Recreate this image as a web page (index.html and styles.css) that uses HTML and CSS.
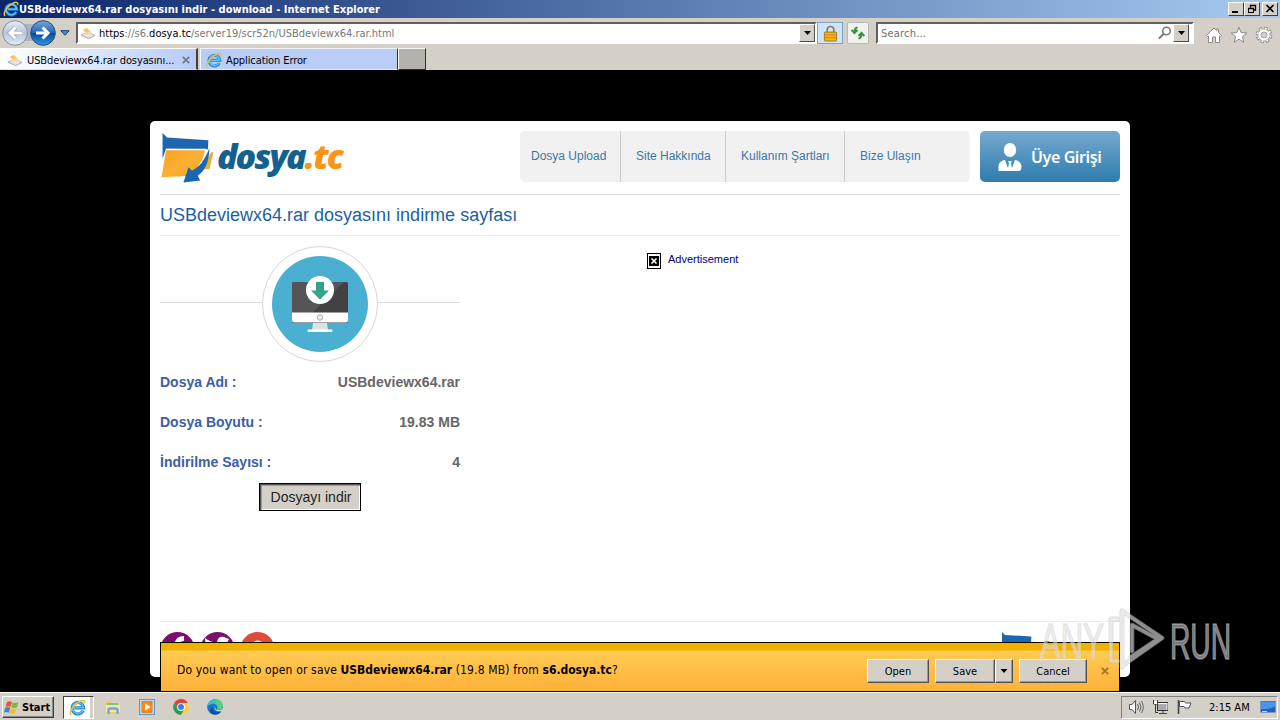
FILE: index.html
```html
<!DOCTYPE html>
<html lang="tr">
<head>
<meta charset="utf-8">
<title>USBdeviewx64.rar dosyasını indir - download</title>
<link rel="stylesheet" href="styles.css">
</head>
<body>
<svg class="defs" width="0" height="0">
  <defs>
    <linearGradient id="gBlue" x1="0" y1="0" x2="0" y2="1"><stop offset="0" stop-color="#7aa3dc"/><stop offset=".48" stop-color="#2468b8"/><stop offset=".52" stop-color="#0b4a9e"/><stop offset="1" stop-color="#2f9be4"/></linearGradient>
    <linearGradient id="gGrey" x1="0" y1="0" x2="0" y2="1"><stop offset="0" stop-color="#e6ecf5"/><stop offset=".5" stop-color="#b9c6da"/><stop offset="1" stop-color="#e3edf8"/></linearGradient>
    <linearGradient id="gFold" x1="0" y1="0" x2="1" y2="1"><stop offset="0" stop-color="#ff9f1f"/><stop offset=".5" stop-color="#fbb034"/><stop offset="1" stop-color="#e9a820"/></linearGradient>
    <symbol id="ie" viewBox="0 0 16 16">
      <path d="M13.300 11A5.400 5.400 0 1 1 13.800 8.300H5" fill="none" stroke="#1a86d8" stroke-width="3"/>
      <path d="M13 11A5.200 5.200 0 1 1 13.600 8.300H5" fill="none" stroke="#5cc0f2" stroke-width="1.500"/>
      <path d="M2.200 14.800C-.6 13 3.500 5.800 9.500 2.600c3.500-2 6-1.600 5 1.400" fill="none" stroke="#f0bf2c" stroke-width="1.500"/>
    </symbol>
    <symbol id="dish" viewBox="0 0 16 16">
      <path d="M1 9.500 8 7l7 3.200-6.500 3.300z" fill="#e4e4e4" stroke="#b5b5b5" stroke-width=".8"/>
      <path d="M1 9.500v1l7.500 3.500 6.500-3v-.800l-6.500 3.300z" fill="#aaa"/>
      <path d="m3 4.500 4-1.500 4 4-5 1.500z" fill="#f6c566"/><path d="m4 8 6-2 2 2.500-5 1.500z" fill="#f3d9a8"/>
    </symbol>
    <symbol id="folder" viewBox="0 0 52 49">
      <path d="M1.500 0 6 4.500 46.500 7 46 16 5 15.500 1.500 25z" fill="#1f66b0"/>
      <path d="M5 15.500h39l-1 5-5 18-9 4-28 2z" fill="#fff"/>
      <path d="M5 17h38c-1 10-8 17-13 25L.5 43.500z" fill="url(#gFold)"/>
      <path d="m49 19 2.500-.500-4 17h-8z" fill="#e6b030"/>
      <path d="M47.500 15C47 31 42 38 36 42l2.500 4.500L22 48.500l5-15 3.500 3.500C38 33 42 28 47.500 15z" fill="#1b66b3"/>
    </symbol>
  </defs>
</svg>
<div class="screen">
  <header class="titlebar">
    <svg class="title-icon" viewBox="0 0 16 16"><use href="#ie"/></svg>
    <h1 class="title">USBdeviewx64.rar dosyasını indir - download - Internet Explorer</h1>
    <div class="win-buttons">
      <span class="wb"><svg viewBox="0 0 14 12"><path d="M3 9h6" stroke="#000" stroke-width="2"/></svg></span>
      <span class="wb"><svg viewBox="0 0 14 12"><path d="M5.500 4.500v-2h5v4.500H9M5 2.500h6M3 5.500h6" fill="none" stroke="#000" stroke-width="1.300"/><rect x="3.500" y="5.500" width="5" height="4" fill="none" stroke="#000"/></svg></span>
      <span class="wb wb-close"><svg viewBox="0 0 14 12"><path d="m3.500 2 7 7m0-7-7 7" stroke="#000" stroke-width="1.600"/></svg></span>
    </div>
  </header>

  <div class="toolbar">
    <svg class="nav" viewBox="0 0 58 29">
      <rect x="14" y="6" width="30" height="17" fill="#aab4c4"/>
      <circle cx="15" cy="15" r="12.300" fill="url(#gGrey)" stroke="#7f8ea3"/>
      <circle cx="43" cy="15" r="12.300" fill="url(#gBlue)" stroke="#284b7a"/>
      <path d="M22 15H10m5.500-5.500L10 15l5.500 5.500" fill="none" stroke="#8896aa" stroke-width="4.200"/>
      <path d="M22 15H10m5.500-5.500L10 15l5.500 5.500M36 15h12m-5.500-5.500L48 15l-5.500 5.500" fill="none" stroke="#fff" stroke-width="3"/>
    </svg>
    <svg class="nav-drop" viewBox="0 0 10 6"><path d="M.8.700h8.400L5 5.300z" fill="#3f8fd0" stroke="#1b4468"/></svg>
    <div class="field address">
      <svg class="i16" viewBox="0 0 16 16"><use href="#dish"/></svg>
      <span class="url"><b>https</b>://s6.<b>dosya.tc</b>/server19/scr52n/USBdeviewx64.rar.html</span>
      <span class="drop"><svg viewBox="0 0 7 4"><path d="M0 0h7L3.500 4z"/></svg></span>
    </div>
    <div class="lock"><svg viewBox="0 0 16 18"><path d="M4.500 8V5a3.500 3.500 0 0 1 7 0v3" fill="none" stroke="#8b7c50" stroke-width="1.800"/><rect x="1.500" y="7.500" width="13" height="9.500" rx="1" fill="#f3b41b" stroke="#a8750e"/><path d="M2 10.500h12M2 13.500h12" stroke="#c98a12"/></svg></div>
    <div class="refresh"><svg viewBox="0 0 16 14"><path d="M7.500 1.500Q4.500 2 4.500 6M1.600 4l2.900 3 2.900-3M8.500 12.500q3-.500 3-4.500M8.600 10l2.900-3 2.900 3" fill="none" stroke="#2f9a3c" stroke-width="2"/></svg></div>
    <div class="field search">
      <span class="placeholder">Search...</span>
      <svg class="glass" viewBox="0 0 14 14"><circle cx="8.500" cy="5" r="3.800" fill="none" stroke="#777" stroke-width="1.500"/><path d="m5.500 8-4.500 4.500" stroke="#777" stroke-width="2"/></svg>
      <span class="drop"><svg viewBox="0 0 7 4"><path d="M0 0h7L3.500 4z"/></svg></span>
    </div>
    <div class="cmds">
      <svg viewBox="0 0 18 18"><path d="m1.500 9.500 7.500-7.500 2.500 2.500V3h2v3.500l3 3-1.200 1.200L14.500 10v6.500h-4V11h-3v5.500h-4V10l-.8.700z" fill="#fff" stroke="#8b8b8b"/></svg>
      <svg viewBox="0 0 18 18"><path d="m9 1.300 2.100 5.300 5.700.4-4.400 3.600 1.500 5.700L9 13.200l-4.900 3.100 1.500-5.700L1.200 7l5.700-.4z" fill="#fff" stroke="#8b8b8b"/></svg>
      <svg viewBox="0 0 18 18"><circle cx="9" cy="9" r="6.600" fill="none" stroke="#8b8b8b" stroke-width="3.400" stroke-dasharray="3.200 1.984"/><circle cx="9" cy="9" r="4.500" fill="none" stroke="#8b8b8b" stroke-width="4"/><circle cx="9" cy="9" r="6.600" fill="none" stroke="#fff" stroke-width="1.800" stroke-dasharray="1.800 3.384" stroke-dashoffset="-.7"/><circle cx="9" cy="9" r="4.500" fill="none" stroke="#fff" stroke-width="2.400"/><circle cx="9" cy="9" r="2.600" fill="#d4d0c8"/></svg>
    </div>
  </div>

  <nav class="tabs">
    <div class="tab active">
      <svg class="i16" viewBox="0 0 16 16"><use href="#dish"/></svg>
      <span class="tab-name first">USBdeviewx64.rar dosyasını...</span>
      <svg class="tab-x" viewBox="0 0 8 8"><path d="m.8.800 6.400 6.400m0-6.400L.8 7.200" stroke="#777b88" stroke-width="1.900"/></svg>
    </div>
    <div class="tab">
      <svg class="i16" viewBox="0 0 16 16"><use href="#ie"/></svg>
      <span class="tab-name">Application Error</span>
    </div>
    <div class="tab-new"></div>
  </nav>

  <main class="viewport">
    <div class="card">
      <div class="site-head">
        <div class="logo">
          <svg viewBox="0 0 190 52"><use href="#folder" x="1" y="2" width="53" height="50"/>
            <text class="logo-text" x="57" y="38" textLength="127" lengthAdjust="spacing"><tspan fill="#14608f">dosya</tspan><tspan fill="#fb9418">.tc</tspan></text></svg>
        </div>
        <ul class="menu">
          <li class="m1">Dosya Upload</li><li class="m2">Site Hakkında</li><li class="m3">Kullanım Şartları</li><li class="m4">Bize Ulaşın</li>
        </ul>
        <div class="login">
          <svg viewBox="0 0 24 28"><ellipse cx="12" cy="7" rx="6.200" ry="7" fill="#fff"/><path d="M.5 28v-4.500c0-3.500 3-6 6.500-6.500l3 8 1-5-1-2h4l-1 2 1 5 3-8c3.500.5 6.500 3 6.500 6.500 0 3-1 4.500-3 4.500z" fill="#fff"/></svg>
          <span>Üye Girişi</span>
        </div>
      </div>
      <h2 class="heading">USBdeviewx64.rar dosyasını indirme sayfası</h2>
      <div class="content">
        <section class="info">
          <svg class="hero" viewBox="0 0 300 116">
            <path d="M0 56.500h300" stroke="#dcdcdc"/>
            <circle cx="160" cy="58" r="57.500" fill="#fff" stroke="#d8d8d8"/>
            <circle cx="160" cy="58" r="48" fill="#4bafd1"/>
            <rect x="132" y="36" width="56" height="41" rx="2" fill="#424143"/>
            <path d="M132 67V38q0-2 2-2h50l-32 31z" fill="#555456"/>
            <path d="M132 66.500h56V74q0 2.500-2.500 2.500h-51q-2.500 0-2.500-2.500z" fill="#fff"/>
            <circle cx="160" cy="71.500" r="2.700" fill="#eee" stroke="#aaa"/>
            <path d="M153 77h14l1 7h-16z" fill="#dde2e5"/><rect x="147.500" y="83.500" width="25" height="2.500" rx="1" fill="#fff"/>
            <circle cx="160" cy="44" r="14" fill="#fff"/>
            <path d="M156 36h8v8.500h5L160 53.500l-9-9h5z" fill="#32a588"/>
          </svg>
          <dl class="facts">
            <div><dt>Dosya Adı :</dt><dd>USBdeviewx64.rar</dd></div>
            <div><dt>Dosya Boyutu :</dt><dd>19.83 MB</dd></div>
            <div><dt>İndirilme Sayısı :</dt><dd>4</dd></div>
          </dl>
          <button class="download">Dosyayı indir</button>
        </section>
        <aside class="ad">
          <svg viewBox="0 0 14 16"><rect x=".5" y=".5" width="13" height="15" fill="#fff" stroke="#000"/><rect x="2" y="3" width="10" height="10"/><path d="m4.500 5.500 5 5m0-5-5 5" stroke="#fff" stroke-width="1.700"/></svg>
          <span>Advertisement</span>
        </aside>
      </div>
      <footer class="foot">
        <svg class="social" viewBox="0 0 120 36">
          <circle cx="17.500" cy="18" r="17" fill="#7a0f6e"/><path d="M15 30V13q0-8 9-8v5q-4 0-4 3v17z" fill="#fff"/>
          <circle cx="57.500" cy="18" r="17" fill="#7a0f6e"/><path d="M45 7q6 5 12 4 1-6 7-5l5 2-2 4q-2 12-12 14-6 0-11-3 5 0 7-3-6-4-6-13z" fill="#fff"/>
          <circle cx="97.500" cy="18" r="17" fill="#dd4b39"/><path d="M104 14q-6-6-11-1-4 6 0 11 7 5 11-3h-6" fill="none" stroke="#fff" stroke-width="2.500"/>
        </svg>
        <svg class="foot-logo" viewBox="0 0 120 36"><use href="#folder" x="1" y="1" width="34" height="32"/><text class="logo-text small" x="36" y="25"><tspan fill="#14608f">dosya</tspan><tspan fill="#fb9418">.tc</tspan></text></svg>
      </footer>
    </div>
    <div class="notice">
      <p class="notice-text">Do you want to open or save <b>USBdeviewx64.rar</b> (19.8 MB) from <b>s6.dosya.tc</b>?</p>
      <div class="btn open">Open</div>
      <div class="btn save">Save</div>
      <div class="btn split"><svg viewBox="0 0 7 4"><path d="M0 0h7L3.500 4z"/></svg></div>
      <div class="btn cancel">Cancel</div>
      <svg class="notice-x" viewBox="0 0 8 8"><path d="m.8.800 6.400 6.400m0-6.400L.8 7.200" stroke="#a57434" stroke-width="1.900"/></svg>
    </div>
  </main>

  <footer class="taskbar">
    <div class="start">
      <svg viewBox="0 0 16 16"><path d="M3 3q2.500-1.500 5 0L6.500 8Q4 6.500 1.500 8z" fill="#e8562d"/><path d="M8.800 3.300q2.500 1.500 5.500 0L12.800 8.300q-3 1.500-5.500 0z" fill="#7fb83c"/><path d="M1.300 8.800q2.500-1.500 5 0l-1.500 5q-2.500-1.500-5 0z" fill="#3c86d2"/><path d="M7 9.200q2.500 1.500 5.500 0l-1.500 5q-3 1.500-5.500 0z" fill="#f5bd23"/></svg>
      <span>Start</span>
    </div>
    <div class="task-active"><svg viewBox="0 0 16 16"><use href="#ie"/></svg></div>
    <svg class="t-icon explorer" viewBox="0 0 16 16"><path d="M1 2h5l1 2h7v10H1z" fill="#e8cb6c"/><path d="M2 4h11v3H2z" fill="#7fc27e"/><path d="M1 6h14v7H1z" fill="#f8e6a2"/><path d="M3.500 15v-4q0-1.500 1.500-1.500h6q1.500 0 1.500 1.500v4" fill="none" stroke="#6aa9d8" stroke-width="2.400"/></svg>
    <svg class="t-icon media" viewBox="0 0 16 16"><rect x=".5" y=".5" width="15" height="15" fill="#b9d8f2" stroke="#5c9bd1"/><rect x="2.500" y="2" width="11" height="12" fill="#f08019"/><circle cx="8" cy="8" r="5" fill="#f58e1e"/><path d="M6 4.500v7L11.500 8z" fill="#fff"/></svg>
    <svg class="t-icon chrome" viewBox="0 0 16 16"><circle cx="8" cy="8" r="7.800" fill="#ffcd40"/><path d="M1.250 4A7.800 7.800 0 0 1 14.800 4H8L4.500 10z" fill="#dd4437"/><path d="M1.250 4A7.800 7.800 0 0 0 8 15.800L11.400 10 8 11.500 4.500 10z" fill="#1ba15d"/><circle cx="8" cy="8" r="3.900" fill="#fff"/><circle cx="8" cy="8" r="3" fill="#3b7ded"/></svg>
    <svg class="t-icon edge" viewBox="0 0 16 16"><circle cx="8" cy="8" r="7.800" fill="#1478ca"/><path d="M.3 7.500C1 3 4 .200 8 .200c5 0 8 3.500 7.700 7C15.500 10 13 11 10 10.500 12 7 8 4 4.500 5 2 5.700.7 7 .3 7.500z" fill="#38c3cf"/><path d="M9 .300c4.500.500 7 4 6.700 7C15.500 10 13 11 10 10.500 12 8 10.500 5.500 9 5z" fill="#54d17c"/><path d="M6 8c-1 4 3 6.500 8 4.500-2 3.500-7 4-10 1.500-2-2-1-5 2-6z" fill="#0d4f9d"/><path d="M8 7.500Q8 11.500 12.500 11l3.500-1.200v2.400Q9 13 7.500 9.500z" fill="#d4d0c8"/></svg>
    <div class="tray">
      <svg viewBox="0 0 16 16"><path d="M1.500 5.500H4l3.500-4v13l-3.500-4H1.500z" fill="#fff" stroke="#555"/><path d="M9.500 5q2 3 0 6M11.500 3.500q3 4.500 0 9M13.500 2q3.500 6 0 12" fill="none" stroke="#666"/></svg>
      <svg viewBox="0 0 16 16"><rect x="5.500" y="3.500" width="10" height="8" fill="#aaa" stroke="#333"/><path d="M6 4.500h9M15 4v7" stroke="#fff"/><path d="M7 14.500h8M11 12v2" stroke="#444"/><path d="M1.500 1v4h4V1M3.500 5v8.500H6" fill="none" stroke="#333"/><rect x="2" y="2" width="3" height="3" fill="#fff"/></svg>
      <svg viewBox="0 0 16 16"><path d="M2.500 1v14" stroke="#444" stroke-width="1.600"/><path d="M3.500 2.500h5l1 1.500h5.500l-2 5H9l-1-1.500H3.500z" fill="#fff" stroke="#555"/></svg>
      <span class="clock">2:15 AM</span>
      <svg class="desk" viewBox="0 0 16 14"><path d="M.5 1h15v11.500H.5z" fill="#2162bd"/><path d="M1 1.500h14v5Q8 10 1 9z" fill="#4c94e6"/><path d="M2 11.500h5" stroke="#bcd8f5"/></svg>
    </div>
  </footer>

  <svg class="watermark" viewBox="0 0 200 66">
    <g fill="#e2e2e2" fill-opacity=".55" stroke="#d0d0d0" stroke-opacity=".5" stroke-width="1.600">
      <text x="4" y="53" textLength="64" lengthAdjust="spacingAndGlyphs">ANY</text>
      <text x="134" y="53" textLength="61" lengthAdjust="spacingAndGlyphs">RUN</text>
    </g>
    <g fill="none" stroke-linejoin="round" stroke-linecap="round">
      <path d="M82 13h-7v42h7M86 5v56M86 5l40 27-40 28M96 45V19l26 14-27 18" stroke="#aaa" stroke-opacity=".4" stroke-width="5"/>
      <path d="M82 13h-7v42h7M86 5v56M86 5l40 27-40 28M96 45V19l26 14-27 18" stroke="#fff" stroke-opacity=".4" stroke-width="3.400"/>
    </g>
  </svg>
</div>
</body>
</html>
```
FILE: styles.css
```css
* { box-sizing: border-box; }
body { margin: 0; background: #000; font-family: "DejaVu Sans Condensed", "DejaVu Sans", sans-serif; font-stretch: condensed; }
svg { display: block; flex: none; }
.defs { position: absolute; }
.screen { position: relative; width: 1280px; height: 720px; display: flex; flex-direction: column; overflow: hidden; font-size: 11px; color: #000; white-space: nowrap; }
b { font-weight: 700; }
.i16 { width: 16px; height: 16px; }

.titlebar { height: 18px; flex: none; display: flex; align-items: center; padding: 0 2px 0 3px; background: linear-gradient(90deg, #0a246a, #a6caf0); }
.title-icon { width: 16px; height: 16px; }
.title { margin: 0; font-size: 11px; font-weight: 700; color: #fff; letter-spacing: .02px; }
.win-buttons { margin-left: auto; display: flex; }
.wb { width: 16px; height: 14px; background: #d4d0c8; border: 1px solid; border-color: #fff #404040 #404040 #fff; }
.wb svg { width: 14px; height: 12px; }
.wb-close { margin-left: 2px; }

.toolbar { height: 30px; flex: none; display: flex; align-items: center; background: #d4d0c8; }
.nav { width: 58px; height: 29px; margin-top: -1px; }
.nav-drop { width: 10px; height: 6px; margin-left: 2px; }
.field { display: flex; align-items: center; height: 22px; background: #fff; border: 2px solid; border-color: #606060 #fff #fff #606060; }
.address { width: 741px; margin-left: 6px; padding-left: 2px; }
.url { margin-left: 3px; padding-top: 1px; color: #777; }
.url b { font-weight: 400; color: #000; }
.drop { margin-left: auto; width: 16px; height: 18px; background: #d4d0c8; border: 1px solid; border-color: #fff #505050 #505050 #fff; display: flex; align-items: center; justify-content: center; }
.drop svg { width: 7px; height: 4px; }
.lock { width: 26px; height: 22px; border: 1px solid #7da2ce; background: #cfe3fb; display: flex; justify-content: center; align-items: center; }
.lock svg { width: 15px; height: 17px; }
.refresh { width: 22px; height: 22px; margin-left: 4px; border: 1px solid #b8b8b8; border-radius: 2px; background: #f1f1ef; display: flex; justify-content: center; align-items: center; }
.refresh svg { width: 16px; height: 14px; }
.search { width: 318px; margin-left: 7px; padding: 0 3px 0 3px; }
.placeholder { padding-top: 1px; color: #6d6d6d; letter-spacing: .2px; }
.glass { width: 14px; height: 14px; margin-left: auto; }
.search .drop { margin-left: 1px; }
.cmds { display: flex; gap: 7px; margin-left: 11px; padding-top: 3px; }
.cmds svg { width: 18px; height: 18px; }

.tabs { height: 22px; flex: none; display: flex; background: #d4d0c8; }
.tab { width: 198px; margin-left: 2px; padding: 2px 6px 0 5px; display: flex; align-items: center; background: #b9cdf6; border: 1px solid; border-color: #f4f6fb #303030 #dfe6f5 #f4f6fb; }
.tab.active { margin-left: 0; padding-left: 6px; background: linear-gradient(90deg, #fff, #b5cbf8); border-color: #fff #404040 #d5e1fa #fff; border-right-width: 2px; }
.tab-name { margin-left: 4px; letter-spacing: -.1px; }
.tab-x { width: 8px; height: 8px; margin-left: auto; }
.tab-new { width: 28px; background: #b5b0a9; border: 1px solid; border-color: #f4f4f4 #303030 #303030 #fff; }

.viewport { position: relative; height: 622px; flex: none; background: #000; padding: 51px 150px 0; overflow: hidden; }
.card { height: 556px; background: #fff; border-radius: 5px; padding: 10px; font-family: "Liberation Sans", Arial, sans-serif; font-stretch: normal; display: flex; flex-direction: column; }
.site-head { display: flex; height: 64px; flex: none; border-bottom: 1px solid #ddd; }
.logo { width: 360px; }
.logo svg { width: 190px; height: 52px; }
.logo-text { font: italic 800 34px "Open Sans", "Noto Sans", sans-serif; }
.logo-text.small { font-size: 20px; }
.menu { display: flex; width: 450px; height: 51px; margin: 0; padding: 0; list-style: none; background: #f1f1f1; border-radius: 5px; color: #3a76ab; font-size: 12px; }
.menu li { line-height: 50px; padding-left: 15px; border-right: 1px solid #ccc; }
.menu .m1 { width: 101px; padding-left: 11px; }
.menu .m2 { width: 105px; }
.menu .m3 { width: 119px; }
.menu .m4 { border: 0; }
.login { width: 140px; height: 51px; margin-left: 10px; border-radius: 5px; background: linear-gradient(#76a9cf, #2e7cae); display: flex; align-items: center; padding-left: 18px; color: #fff; font: 600 16px "Noto Sans", sans-serif; letter-spacing: -.4px; }
.login svg { width: 24px; height: 28px; margin-right: 9px; }
.heading { margin: 0; height: 41px; flex: none; line-height: 41px; border-bottom: 1px solid #eee; color: #1b5fa5; font-size: 18px; font-weight: 400; }
.content { display: flex; height: 386px; flex: none; padding-top: 10px; border-bottom: 1px solid #eee; }
.info { width: 300px; }
.hero { width: 300px; height: 116px; }
.facts { margin: 0; font-size: 14px; font-weight: 700; }
.facts div { display: flex; justify-content: space-between; height: 40px; line-height: 40px; }
.facts dt { color: #3a5ea5; }
.facts dd { margin: 0; color: #666; }
.download { display: block; margin: 1px 0 0 99px; width: 102px; height: 28px; padding: 0 0 0 2px; border: 1px solid #000; box-shadow: inset 1px 1px #555, inset 2px 2px #999, inset -1px -1px #fff; border-radius: 0; background: #d4d0c8; font: 14px "Liberation Sans", Arial, sans-serif; color: #222; }
.ad { margin-left: 187px; padding-top: 6px; display: flex; align-items: flex-start; color: #000080; }
.ad svg { width: 14px; height: 16px; margin-top: 1px; }
.ad span { margin-left: 7px; line-height: 14px; }
.foot { display: flex; justify-content: space-between; padding-top: 9px; }
.social, .foot-logo { width: 120px; height: 36px; }

.notice { position: absolute; left: 160px; right: 160px; bottom: 0; height: 50px; border: 1px solid #000; background: linear-gradient(#f2b100 0, #f2b100 7px, #ffcb52 8px, #ffb13a 100%); display: flex; padding: 16px 10px 0 16px; }
.notice-text { margin: 0 auto 0 0; line-height: 22px; font-size: 12px; letter-spacing: .15px; }
.notice-text b { letter-spacing: -.02px; }
.btn { height: 24px; background: #d4d0c8; border: 1px solid; border-color: #fff #505050 #505050 #fff; box-shadow: inset -1px -1px #999; display: flex; align-items: center; justify-content: center; }
.open { width: 62px; margin-right: 6px; }
.save { width: 60px; }
.split { width: 18px; margin-right: 6px; }
.split svg { width: 8px; height: 4px; }
.cancel { width: 68px; }
.notice-x { width: 8px; height: 8px; margin: 8px 0 0 14px; }

.taskbar { height: 28px; flex: none; display: flex; align-items: center; background: #d4d0c8; border-top: 1px solid #fff; padding: 1px 2px 0 2px; }
.start { width: 52px; height: 22px; display: flex; align-items: center; padding-left: 1px; border: 1px solid; border-color: #fff #404040 #404040 #fff; box-shadow: inset -1px -1px #888; font-weight: 700; font-size: 11px; }
.start svg { width: 16px; height: 16px; margin-right: 2px; }
.task-active { width: 31px; height: 23px; margin-left: 9px; background: #fff; border: 1px solid; border-color: #404040 #fff #fff #404040; box-shadow: inset -3px 0 #d4d0c8, inset -4px 0 #fff; display: flex; align-items: center; padding-left: 5px; }
.task-active svg { width: 17px; height: 17px; }
.t-icon { width: 16px; height: 16px; margin-left: 18px; }
.explorer { margin-left: 11px; }
.tray { margin-left: auto; width: 157px; height: 23px; border: 1px solid; border-color: #808080 #fff #fff #808080; display: flex; align-items: center; gap: 8px; padding-left: 6px; }
.tray svg { width: 16px; height: 16px; }
.clock { margin-left: 9px; width: 42px; font-size: 11px; }
.tray .desk { height: 14px; margin-left: 1px; }

.watermark { position: absolute; left: 1036px; top: 606px; width: 200px; height: 66px; }
.watermark text { font: 50px "Liberation Sans", sans-serif; }
```
